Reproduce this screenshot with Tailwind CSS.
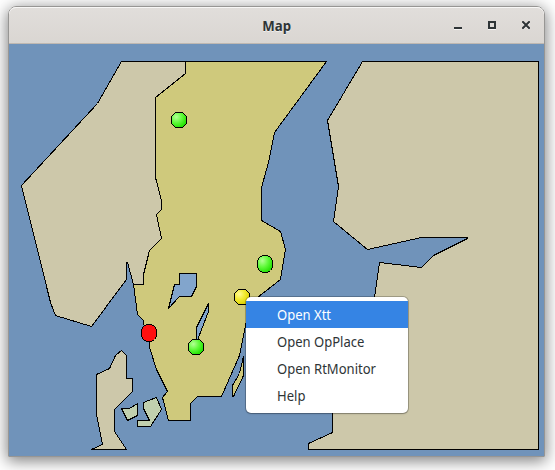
<!DOCTYPE html>
<html lang="en">
<head>
<meta charset="utf-8">
<title>Map</title>
<script src="https://cdn.jsdelivr.net/npm/@tailwindcss/browser@4"></script>
</head>
<body class="bg-white h-[470px] w-[555px] overflow-hidden pl-2 pt-1.5 font-['Noto_Sans','Open_Sans',sans-serif]">
<main class="flex h-[451px] w-[537px] flex-col overflow-hidden rounded-t-lg border border-[#979694] shadow-[0_3px_15px_1px_rgba(0,0,0,0.5)]">
  <header class="grid h-[37px] shrink-0 grid-cols-[1fr_auto_1fr] items-center rounded-t-[7px] border-b border-[#bfb8b1] bg-linear-to-b from-[#e1dedb] to-[#dad6d2] shadow-[inset_0_1px_0_#f8f7f6]">
    <span></span>
    <h1 class="scale-x-[.92] pt-[3px] text-[14.4px] font-bold leading-none text-[#2e3436] [text-shadow:0_1px_#f0efed]">Map</h1>
    <div class="flex justify-end gap-[26px] pr-[14px] text-[#2e3436]">
      <svg class="h-[9px] w-2" viewBox="0 0 8 9" shape-rendering="crispEdges"><path d="M0 8h8v1H0z" fill="#f6f5f4"/><path d="M0 6h8v2H0z" fill="currentColor"/></svg>
      <svg class="h-[9px] w-2" viewBox="0 0 8 9" shape-rendering="crispEdges"><path d="M0 8h8v1H0z" fill="#f6f5f4"/><path d="M1 1h6v6H1z" fill="none" stroke="currentColor" stroke-width="2"/></svg>
      <svg class="h-[9px] w-2" viewBox="0 0 8 9"><path d="M1 2l6 6M7 2L1 8" stroke="#f6f5f4" stroke-width="2" stroke-linecap="square"/><path d="M1 1l6 6M7 1L1 7" stroke="currentColor" stroke-width="2" stroke-linecap="square"/></svg>
    </div>
  </header>
  <section class="relative h-[412px] w-[535px] bg-[#7093ba]">
    <svg class="block h-[412px] w-[535px]" viewBox="9 44 535 412" shape-rendering="crispEdges">
      <defs>
        <radialGradient id="g" cx=".32" cy=".3" r=".75"><stop offset="0" stop-color="#b4ff96"/><stop offset=".5" stop-color="#62fa3c"/><stop offset="1" stop-color="#22e000"/></radialGradient>
        <radialGradient id="y" cx=".32" cy=".3" r=".75"><stop offset="0" stop-color="#fffa96"/><stop offset=".5" stop-color="#f2ea30"/><stop offset="1" stop-color="#dccf00"/></radialGradient>
      </defs>
      <g transform="translate(.5 .5)" stroke="#000" fill="#cdc8aa">
        <path d="M121 61H185V73L155 97V177L161 200V209L156 214L161 238L149 250L143 274V284H133L127 262H126V279L91 326L55 315L50 302L21 185L97 103Z"/>
        <path fill="#cfc97c" d="M185 61H326L274 132L268 162L261 187V220L280 231L285 249L280 279L257 297L248 310L239 355L221 396H197L190 403V420H168L162 397L167 391L156 369L149 347V329L143 324V320L137 314L133 284H143V274L149 250L161 238L156 214L161 209V200L155 177V97L185 73Z"/>
        <path d="M362 61H538V449H308V443L332 432V413L374 297L379 262L421 267L433 255L467 238L467 237H421L367 249L333 221L338 186L327 120Z"/>
        <path d="M121 350L126 355V378H132V391L114 409V431L126 449H91L102 444L96 414V374L109 368L115 355Z"/>
        <path fill="#cfc97c" d="M243 356V375L233 396H232V385L239 373Z"/>
        <g fill="#c1d0ae">
          <path d="M121 408H129L137 403V415L127 420Z"/>
          <path d="M143 402L156 397L161 409L150 426H137V420H149L143 408Z"/>
        </g>
        <g fill="#82a5cc">
          <path d="M179 273H196V286L191 296H179L168 308L174 284H179Z"/>
          <path d="M208 303L196 327V342L208 311Z"/>
        </g>
      </g>
      <g stroke="#000">
        <path d="M175.5 112.5h7l4 4v7l-4 4h-7l-4 -4v-7z" fill="url(#g)"/>
        <path d="M262.5 255.5h5l3 2l2 3v7l-2 3l-3 2h-5l-3 -2l-2 -3v-7l2 -3z" fill="url(#g)"/>
        <path d="M192.5 339.5h7l4 4v7l-4 4h-7l-4 -4v-7z" fill="url(#g)"/>
        <path d="M238.5 289.5h7l4 4v7l-4 4h-7l-4 -4v-7z" fill="url(#y)"/>
        <path d="M146.5 324.5h5l3 2l2 3v7l-2 3l-3 2h-5l-3 -2l-2 -3v-7l2 -3z" fill="#ff1010"/>
      </g>
    </svg>
    <ul class="absolute left-[237px] top-[253px] flex w-[162px] flex-col rounded-[5px] bg-white pb-1 pt-1 text-[14.67px] leading-[26px] text-[#2e3436] shadow-[0_0_0_1px_rgba(0,0,0,0.22),0_1px_2px_rgba(0,0,0,0.2)]">
      <li class="h-[27px] bg-[#3584e4] pl-[31px] text-white"><span class="inline-block origin-left scale-x-[.89]">Open Xtt</span></li>
      <li class="h-[27px] pl-[31px]"><span class="inline-block origin-left scale-x-[.89]">Open OpPlace</span></li>
      <li class="h-[27px] pl-[31px]"><span class="inline-block origin-left scale-x-[.89]">Open RtMonitor</span></li>
      <li class="h-[27px] pl-[31px]"><span class="inline-block origin-left scale-x-[.89]">Help</span></li>
    </ul>
  </section>
</main>
</body>
</html>
